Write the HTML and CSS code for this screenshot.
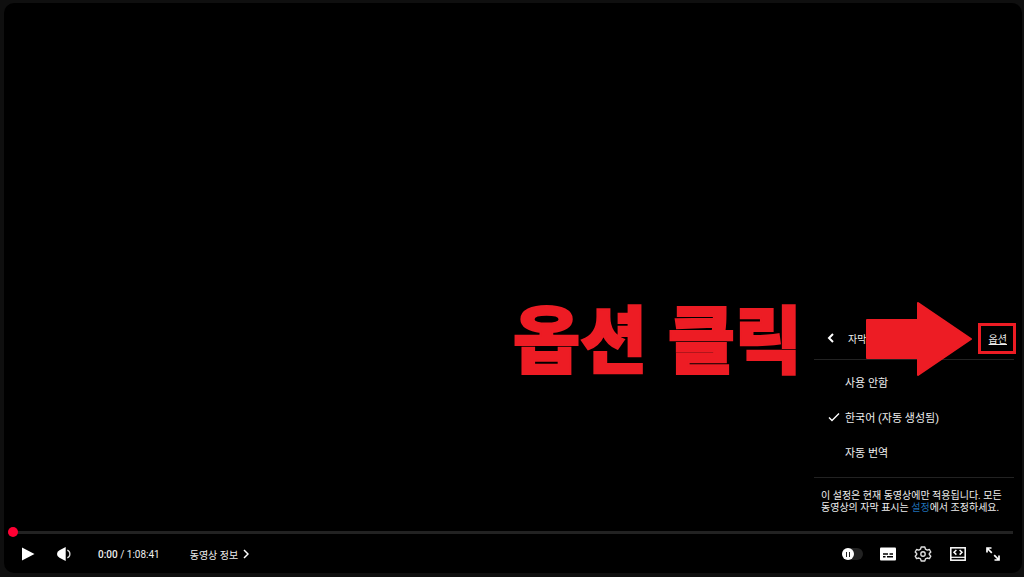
FILE: index.html
```html
<!DOCTYPE html>
<html lang="ko">
<head>
    <meta charset="UTF-8">
    <meta name="viewport" content="width=device-width, initial-scale=1.0">
    <title>동영상 플레이어</title>
    <link rel="stylesheet" href="styles.css">
</head>
<body>
    <div class="player">
        <div class="stage">
            <!-- Subtitle menu -->
            <div class="menu">
                <div class="menu-header">
                    <button class="back" aria-label="뒤로">
                        <svg width="8" height="10" viewBox="0 0 8 10"><path d="M6 1 L2 5 L6 9" fill="none" stroke="#fff" stroke-width="2"/></svg>
                    </button>
                    <span class="menu-title">자막</span>
                    <button class="options">옵션</button>
                </div>
                <div class="menu-list">
                    <button class="menu-item">사용 안함</button>
                    <button class="menu-item">
                        <svg class="check" width="12" height="10" viewBox="0 0 12 10"><path d="M1 5.5 L4 8.5 L11 1.5" fill="none" stroke="#fff" stroke-width="1.4"/></svg>
                        한국어 (자동 생성됨)
                    </button>
                    <button class="menu-item">자동 번역</button>
                </div>
                <p class="menu-note">이 설정은 현재 동영상에만 적용됩니다. 모든 동영상의 자막 표시는 <a href="#">설정</a>에서 조정하세요.</p>

                <!-- Callout over the menu -->
                <div class="callout">
                    <span class="callout-text">옵션 클릭</span>
                    <svg width="106" height="76" viewBox="0 0 106 76"><path d="M1 19 H52 V2 L105 38 L52 74 V57 H1 Z" fill="#ed1c24" stroke="#ed1c24" stroke-width="2" stroke-linejoin="round"/></svg>
                </div>
                <div class="callout-box"></div>
            </div>
        </div>

        <input class="progress" type="range" min="0" max="4121" value="0" aria-label="탐색">

        <div class="controls">
            <button class="icon" aria-label="재생">
                <svg width="16" height="16" viewBox="0 0 16 16"><path d="M2 1.5 L14.5 8 L2 14.5 Z" fill="#fff"/></svg>
            </button>
            <button class="icon" aria-label="음소거">
                <svg width="16" height="16" viewBox="0 0 16 16"><path d="M9.7 1 V15 L3.5 11.8 Q1 10.8 1 8 Q1 5.2 3.5 4.2 Z" fill="#fff"/><path d="M11.3 4.2 Q13.9 5.2 13.9 8 Q13.9 10.8 11.3 11.8" fill="none" stroke="#ddd" stroke-width="1.3"/></svg>
            </button>
            <div class="time"><b>0:00</b> / 1:08:41</div>
            <button class="chapter">동영상 정보
                <svg width="6" height="10" viewBox="0 0 6 10"><path d="M1 1 L5 5 L1 9" fill="none" stroke="#fff" stroke-width="1.5"/></svg>
            </button>
            <div class="right">
                <input class="autoplay" type="checkbox" aria-label="자동재생">
                <button class="icon" aria-label="자막">
                    <svg width="18" height="16" viewBox="0 0 18 16"><rect x="1" y="1.5" width="16" height="13" rx="1" fill="#fff"/><path d="M4 8 H9 M10.5 8 H14 M4 10.8 H6.5 M8 10.8 H14" stroke="#000" stroke-width="1.4"/></svg>
                </button>
                <button class="icon" aria-label="설정">
                    <svg width="18" height="16" viewBox="0 0 18 16"><path d="M7.2 1 H10.8 L11.5 3.2 L13.2 4.1 L15.4 3.5 L16.8 6 L15.3 7.6 V8.6 L16.8 10.2 L15.4 12.6 L13.2 12 L11.5 12.9 L10.8 15 H7.2 L6.5 12.9 L4.8 12 L2.6 12.6 L1.2 10.2 L2.7 8.6 V7.6 L1.2 6 L2.6 3.5 L4.8 4.1 L6.5 3.2 Z" fill="none" stroke="#ddd" stroke-width="1.4" stroke-linejoin="round"/><circle cx="9" cy="8" r="2.2" fill="none" stroke="#ddd" stroke-width="1.4"/></svg>
                </button>
                <button class="icon" aria-label="영화관 모드">
                    <svg width="18" height="16" viewBox="0 0 18 16"><rect x="1.8" y="1.8" width="14.4" height="12.4" fill="none" stroke="#fff" stroke-width="1.5"/><path d="M2 11.3 H16" stroke="#fff" stroke-width="1.2"/><path d="M7.4 4 L5 6.3 L7.4 8.6 M10.6 4 L13 6.3 L10.6 8.6" fill="none" stroke="#fff" stroke-width="1.5"/></svg>
                </button>
                <button class="icon" aria-label="전체 화면">
                    <svg width="18" height="16" viewBox="0 0 18 16"><path d="M3 6.5 V2 H7.5 M3 2 L7.8 6.8 M15 9.5 V14 H10.5 M15 14 L10.2 9.2" fill="none" stroke="#fff" stroke-width="1.7"/></svg>
                </button>
            </div>
        </div>
    </div>
</body>
</html>
```
FILE: styles.css
```css
* {
    box-sizing: border-box;
}

body {
    margin: 0;
    padding: 3px 2px 4px 4px;
    height: 100vh;
    background-color: #0f0f0f;
    color: #eee;
    font-family: Roboto, "Noto Sans CJK KR", sans-serif;
    font-size: 10px;
}

button {
    margin: 0;
    padding: 0;
    border: none;
    background: none;
    color: inherit;
    font: inherit;
    cursor: pointer;
}

svg {
    display: block;
}

.player {
    display: flex;
    flex-direction: column;
    height: 100%;
    background-color: #000;
    border-radius: 10px;
}

.stage {
    flex: 1;
    display: flex;
    justify-content: flex-end;
    align-items: flex-end;
    padding: 0 8px 13px 0;
}

.menu {
    position: relative;
    width: 200px;
}

.menu-header {
    display: flex;
    align-items: center;
    height: 43px;
    padding: 0 7px 0 13px;
    border-bottom: 1px solid #222;
}

.menu-title {
    margin-left: 13px;
}

.options {
    margin-left: auto;
    text-decoration: underline;
}

.menu-list {
    padding: 4px 0 8px;
    border-bottom: 1px solid #222;
}

.menu-item {
    position: relative;
    display: block;
    width: 100%;
    height: 35px;
    padding-left: 31px;
    font-size: 11px;
    text-align: left;
}

.check {
    position: absolute;
    left: 14px;
    top: 13px;
}

.menu-note {
    margin: 0;
    padding: 12px 7px 0;
    line-height: 12px;
}

.menu-note a {
    color: #1f6fb5;
    text-decoration: none;
}

.callout {
    position: absolute;
    right: 42px;
    top: -16px;
    display: flex;
    align-items: center;
    gap: 64px;
}

.callout-text {
    height: 76px;
    color: #ed1c24;
    font-family: "Noto Sans CJK KR", sans-serif;
    font-size: 73px;
    font-weight: 900;
    line-height: 68px;
    white-space: nowrap;
    -webkit-text-stroke: 2px #ed1c24;
    stroke-linejoin: round;
}

.callout-box {
    position: absolute;
    right: -2px;
    top: 6px;
    width: 38px;
    height: 31px;
    border: 3px solid #ed1c24;
    pointer-events: none;
}

.progress {
    -webkit-appearance: none;
    appearance: none;
    height: 10px;
    margin: 0 9px 0 4px;
    background: linear-gradient(#222, #222) center / 100% 3px no-repeat;
}

.progress::-webkit-slider-thumb {
    -webkit-appearance: none;
    width: 10px;
    height: 10px;
    border-radius: 50%;
    background-color: #ff0033;
}

.controls {
    display: flex;
    align-items: center;
    height: 36px;
    padding: 0 20px 2px 16px;
}

.controls > .icon {
    margin-right: 20px;
}

.time {
    margin: 0 30px 0 6px;
    font-size: 10px;
}

.time b {
    font-weight: 500;
}

.chapter {
    display: flex;
    align-items: center;
    gap: 5px;
}

.right {
    display: flex;
    align-items: center;
    gap: 17px;
    margin-left: auto;
}

.autoplay {
    -webkit-appearance: none;
    appearance: none;
    width: 21px;
    height: 12px;
    margin: 0 -1px 0 0;
    border-radius: 6px;
    background-color: #222;
}

.autoplay::before {
    content: "";
    display: block;
    width: 12px;
    height: 12px;
    border-radius: 50%;
    background: linear-gradient(90deg, #222 1px, transparent 1px 3px, #222 3px) center / 4px 5px no-repeat #fff;
}

@media (max-width: 600px) {
    .callout-text {
        font-size: 36px;
    }

    .callout {
        gap: 16px;
    }
}
```
